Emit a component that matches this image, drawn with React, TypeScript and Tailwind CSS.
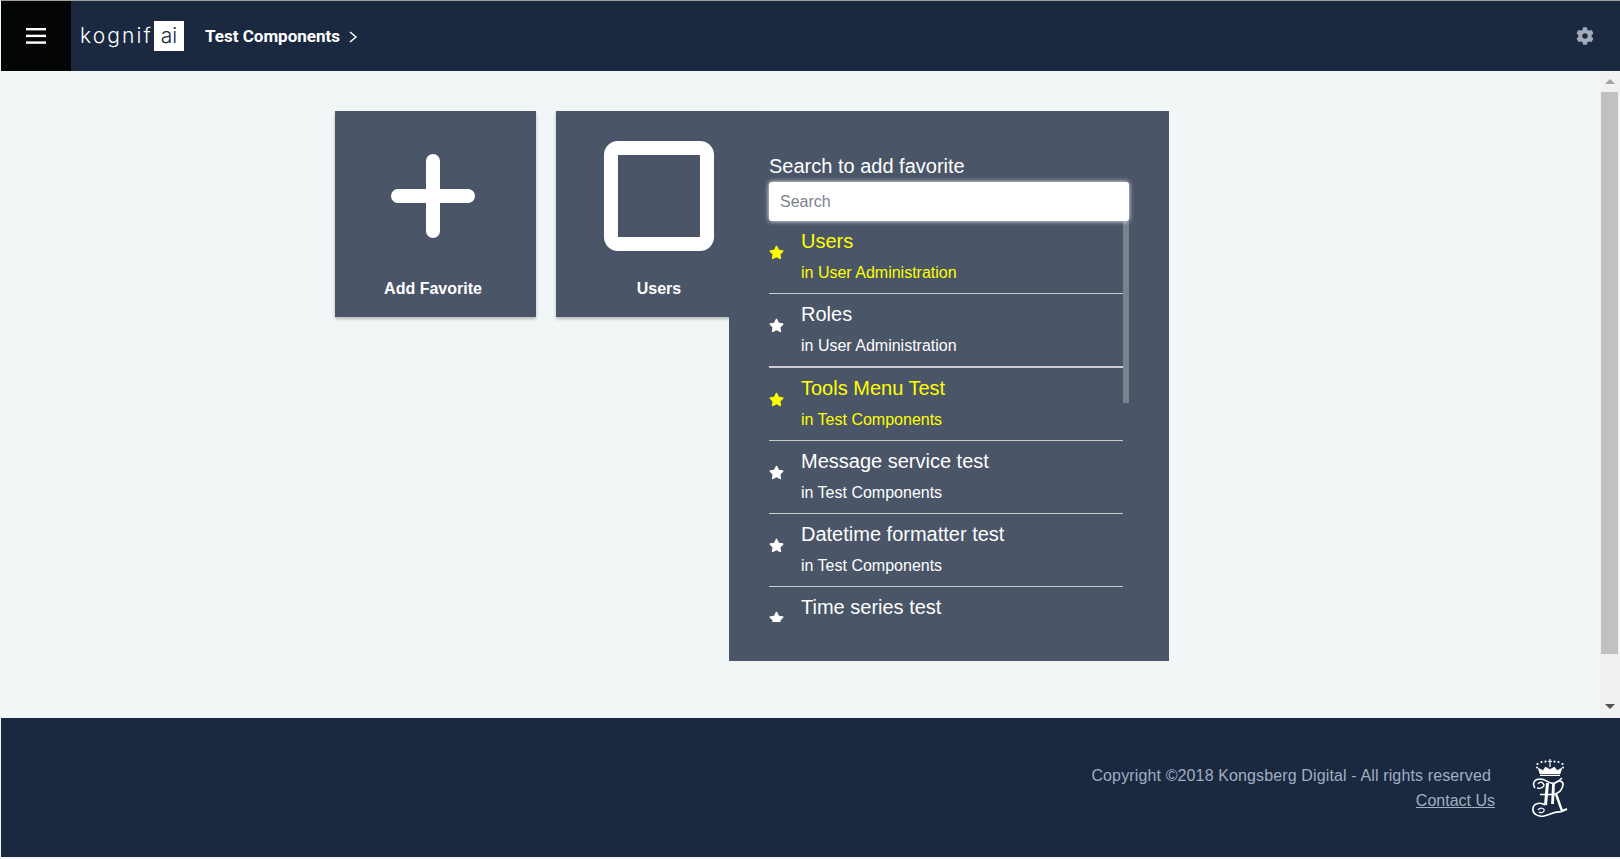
import type { ReactNode } from "react";
import { FaCog, FaStar } from "react-icons/fa";

interface Favorite {
  title: string;
  group: string;
  active?: boolean;
  thick?: boolean;
}

const favorites: Favorite[] = [
  { title: "Users", group: "in User Administration", active: true },
  { title: "Roles", group: "in User Administration", thick: true },
  { title: "Tools Menu Test", group: "in Test Components", active: true },
  { title: "Message service test", group: "in Test Components" },
  { title: "Datetime formatter test", group: "in Test Components" },
  { title: "Time series test", group: "in Test Components" },
];

const Crest = () => (
  <svg width="36" height="60" viewBox="0 0 36 60" fill="none" stroke="white">
    {/* crown */}
    <path d="M8 16 L6 10 L11 12.5 L13.5 9 L18 11.5 L22.5 9 L25 12.5 L30 10 L28 16 Z" fill="white" strokeWidth="0.5" />
    <path d="M8 17.5 H28" strokeWidth="1" />
    <path d="M18 1 V9" strokeWidth="1.2" />
    <path d="M16 3.4 H20" strokeWidth="1" />
    <g fill="white" stroke="none">
      <circle cx="5.5" cy="6" r="1.1" />
      <circle cx="9.5" cy="4" r="1.1" />
      <circle cx="13.5" cy="3.6" r="1.1" />
      <circle cx="22.5" cy="3.6" r="1.1" />
      <circle cx="26.5" cy="4" r="1.1" />
      <circle cx="30.5" cy="6" r="1.1" />
      <circle cx="5" cy="9.4" r="1" />
      <circle cx="31" cy="9.4" r="1" />
    </g>
    {/* monogram */}
    <path d="M3 30 C0 26 2 21 8 21 C13 21 15 24 19 25 C23 26 27 23 30 20" strokeWidth="1.6" />
    <path d="M6 26 C8 23 11 24 12 27 C12 29 9 31 5 30" strokeWidth="1.3" />
    <path d="M15.5 25 L13.5 47" strokeWidth="3" />
    <path d="M21.5 26 L20.5 46" strokeWidth="2.8" />
    <path d="M8 36.5 H23" strokeWidth="1.6" />
    <path d="M22 26 C28 20 33 24 30 30 C29 33 26 35 23 36" strokeWidth="1.6" />
    <path d="M24 36 L30 53 L35 51" strokeWidth="2.4" />
    <path d="M13 47 C9 44 2 45 1 50 C0 56 6 59 12 58 C18 57 22 53 29 54" strokeWidth="1.6" />
    <path d="M6 52 C8 49 13 50 12 53 C11 55 8 55 7 54" strokeWidth="1.2" />
  </svg>
);

const Header = () => (
  <header className="flex h-[70px] items-center bg-[#1a2940]">
    <div className="flex h-full w-[70px] items-center justify-center bg-[#030507]">
      <svg width="20" height="16" viewBox="0 0 20 16" fill="white">
        <rect y="0" width="20" height="2.4" />
        <rect y="6.7" width="20" height="2.4" />
        <rect y="13.4" width="20" height="2.4" />
      </svg>
    </div>
    <div className="ml-[9px] flex items-center">
      <span className="w-[74px] font-['Inter'] text-[21px] font-light tracking-[2.1px] text-white">
        kognif
      </span>
      <span className="flex h-[30px] w-[30px] items-center justify-center bg-white font-['Inter'] text-[21px] font-light text-[#1a2940]">
        ai
      </span>
    </div>
    <span className="ml-[21px] mt-[1px] font-['Roboto'] text-[17px] font-bold text-white">
      Test Components
    </span>
    <svg className="ml-[8px] mt-[1px]" width="10" height="14" viewBox="0 0 10 14" fill="none" stroke="white" strokeWidth="1.5">
      <path d="M2 2 L8 7 L2 12" />
    </svg>
    <FaCog className="ml-auto mr-[26px] text-[18px] text-[#a3abb8]" />
  </header>
);

const PageScrollbar = () => (
  <div className="flex w-[21px] flex-col items-center bg-[#f1f1f1]">
    <div className="flex h-[21px] w-full items-center justify-center">
      <span className="h-0 w-0 border-x-[5px] border-b-[5px] border-x-transparent border-b-[#a3a3a3]" />
    </div>
    <div className="h-[562px] w-[17px] bg-[#c1c1c1]" />
    <div className="flex flex-1 items-end justify-center pb-[9px]">
      <span className="h-0 w-0 border-x-[5px] border-t-[5px] border-x-transparent border-t-[#505050]" />
    </div>
  </div>
);

const FavoriteRow = ({ item }: { item: Favorite }) => (
  <div
    className={`flex shrink-0 items-center border-[#ccc] ${
      item.thick ? "h-[74px] border-b-2" : "h-[73px] border-b"
    } ${item.active ? "text-[#ffff00]" : "text-white"}`}
  >
    <FaStar className="mb-[9px] w-[32px] shrink-0 pr-[17px] text-[15px]" />
    <div className="mb-[4px]">
      <div className="text-[20px] leading-[30px]">{item.title}</div>
      <div className="mt-[5px] text-[16px] leading-[24px]">{item.group}</div>
    </div>
  </div>
);

const SearchPanel = () => (
  <div className="absolute left-[173px] top-0 h-[550px] w-[440px] bg-[#4a5568] pl-[40px] pr-[40px] pt-[40px]">
    <div className="text-[20px] leading-[31px] text-white">Search to add favorite</div>
    <input
      placeholder="Search"
      className="relative z-10 block h-[39px] w-full rounded-[3px] bg-white px-[11px] text-[16px] text-[#495057] shadow-[0_0_5px_#ffffff] outline-none placeholder:text-[#7b838c]"
    />
    <div className="flex h-[401px] overflow-hidden">
      <div className="flex-1 overflow-hidden">
        {favorites.map((item) => (
          <FavoriteRow key={item.title} item={item} />
        ))}
      </div>
      <div className="h-[182px] w-[6px] bg-[#7a8290]" />
    </div>
  </div>
);

const Tile = ({ label, className, children }: { label: string; className: string; children: ReactNode }) => (
  <div className={`flex h-[206px] w-[201px] flex-col items-center bg-[#4a5568] shadow-[0_2px_3px_rgba(0,0,0,0.25)] ${className}`}>
    <div className="flex h-[166px] items-center justify-center pt-[4px]">{children}</div>
    <div className="text-[16px] font-bold text-white">{label}</div>
  </div>
);

const Footer = () => (
  <footer className="flex h-[139px] items-start justify-end bg-[#1a2940] pr-[52px] pt-[40px] text-[16px] text-[#a0aec0]">
    <div className="flex flex-col items-end pr-[37px] pt-[6px]">
      <div className="pr-[4px] leading-[24px] tracking-[0.13px]">Copyright ©2018 Kongsberg Digital - All rights reserved</div>
      <a className="mt-[1px] leading-[24px] underline">Contact Us</a>
    </div>
    <Crest />
  </footer>
);

const App = () => {
  return (
    <div className="flex h-[859px] w-full flex-col overflow-hidden border-t border-l border-t-[#a0a0a0] border-l-[#f1f6f7] bg-[#f1f6f7] font-['Liberation_Sans',sans-serif]">
      <Header />
      <div className="flex h-[647px]">
        <main className="flex flex-1 gap-[20px] pl-[334px] pt-[40px]">
          <Tile label="Add Favorite" className="pr-[5px]">
            <svg width="84" height="84" viewBox="0 0 84 84" stroke="white" strokeWidth="14" strokeLinecap="round">
              <path d="M42 7 V77 M7 42 H77" />
            </svg>
          </Tile>
          <div className="relative">
            <Tile label="Users" className="pl-[5px]">
              <div className="h-[110px] w-[110px] rounded-[14px] border-[14px] border-white" />
            </Tile>
            <SearchPanel />
          </div>
        </main>
        <PageScrollbar />
      </div>
      <Footer />
    </div>
  );
};

export default App;
